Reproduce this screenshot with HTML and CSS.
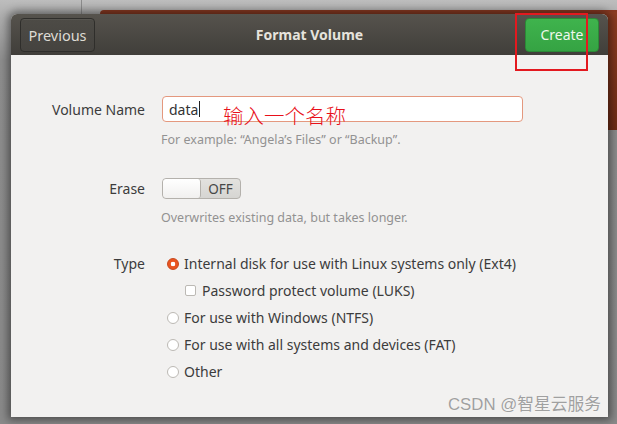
FILE: index.html
```html
<!DOCTYPE html>
<html>
<head>
<meta charset="utf-8">
<link rel="stylesheet" href="styles.css">
</head>
<body>
<div class="desktop">
  <div class="back-window"></div>
  <div class="back-line"></div>
  <div class="right-strip"></div>
  <div class="dialog">
    <div class="header">
      <button class="btn btn-prev">Previous</button>
      <div class="title">Format Volume</div>
      <button class="btn btn-create">Create</button>
    </div>
    <div class="content">
      <div class="row row-name">
        <div class="label">Volume Name</div>
        <div class="field">
          <div class="input"><span class="value">data</span><span class="caret"></span></div>
          <div class="annot">输入一个名称</div>
        </div>
      </div>
      <div class="hint hint-name">For example: “Angela’s Files” or “Backup”.</div>
      <div class="row row-erase">
        <div class="label">Erase</div>
        <div class="switch"><span class="knob"></span><span class="off">OFF</span></div>
      </div>
      <div class="hint hint-erase">Overwrites existing data, but takes longer.</div>
      <div class="row row-type">
        <div class="label">Type</div>
        <div class="options">
          <div class="opt"><span class="radio checked"></span>Internal disk for use with Linux systems only (Ext4)</div>
          <div class="opt sub"><span class="check"></span>Password protect volume (LUKS)</div>
          <div class="opt"><span class="radio"></span>For use with Windows (NTFS)</div>
          <div class="opt"><span class="radio"></span>For use with all systems and devices (FAT)</div>
          <div class="opt"><span class="radio"></span>Other</div>
        </div>
      </div>
    </div>
  </div>
  <div class="highlight"></div>
  <div class="watermark">CSDN @智星云服务</div>
</div>
</body>
</html>
```
FILE: styles.css
```css
html, body {
  margin: 0;
  padding: 0;
}
body {
  width: 617px;
  height: 424px;
  overflow: hidden;
  background: #a7a7a7;
  font-family: "Noto Sans", "DejaVu Sans", sans-serif;
}
.desktop {
  position: relative;
  width: 617px;
  height: 424px;
  background: linear-gradient(to bottom, #bdbdbd 0px, #b0b0b0 14px, #8e8e8e 60px, #8a8a8a 424px);
  overflow: hidden;
}
.back-window {
  position: absolute;
  left: 100px;
  top: 10px;
  width: 530px;
  height: 5px;
  background: #8a3a22;
  border-radius: 4px 0 0 0;
}
.back-line {
  position: absolute;
  left: 81px;
  top: 0;
  width: 1px;
  height: 14px;
  background: #8c8c8c;
}
.right-strip {
  position: absolute;
  left: 600px;
  top: 12px;
  width: 20px;
  height: 118px;
  background: linear-gradient(to bottom, #8d3d22, #6e2c16);
}
.dialog {
  position: absolute;
  left: 11px;
  top: 14px;
  width: 597px;
  height: 403px;
  border-radius: 6px 6px 0 0;
  overflow: hidden;
  background: #f2f1f0;
  box-shadow: 0 0 8px 3px rgba(0,0,0,0.45);
}
.header {
  height: 41px;
  background: linear-gradient(to bottom, #56534d, #403e3a);
  display: flex;
  align-items: center;
  justify-content: space-between;
  padding: 0 9px 0 9px;
  box-sizing: border-box;
  position: relative;
}
.btn {
  font-family: inherit;
  font-size: 14px;
  height: 34px;
  border-radius: 4px;
  padding: 0 0;
  box-sizing: border-box;
}
.btn-prev {
  width: 75px;
  font-size: 14.5px;
  color: #dedbd4;
  background: linear-gradient(to bottom, #4d4b46, #45433f);
  border: 1px solid #2f2e2b;
  box-shadow: inset 0 1px 0 rgba(255,255,255,0.06);
}
.btn-create {
  width: 74px;
  color: #eef7ec;
  background: linear-gradient(to bottom, #3fb34d, #35a343);
  border: 1px solid #2b8a37;
}
.title {
  position: absolute;
  left: 0;
  right: 0;
  text-align: center;
  color: #e6e3dd;
  font-weight: bold;
  font-size: 14px;
  pointer-events: none;
}
.content {
  padding-top: 41px;
  color: #3c3c3c;
  font-size: 14px;
}
.row {
  display: flex;
  align-items: center;
}
.label {
  width: 134px;
  text-align: right;
  margin-right: 17px;
  flex: none;
}
.field {
  position: relative;
}
.input {
  width: 361px;
  height: 26px;
  box-sizing: border-box;
  border: 1px solid #e4987e;
  border-radius: 4px;
  background: #ffffff;
  display: flex;
  align-items: center;
  padding-left: 6px;
  color: #333;
}
.caret {
  display: inline-block;
  width: 1px;
  height: 16px;
  background: #222;
  margin-left: 1px;
}
.annot {
  position: absolute;
  left: 61px;
  top: 5px;
  color: #e8101a;
  font-family: "Noto Sans CJK SC", sans-serif;
  font-weight: 300;
  font-size: 20.5px;
  line-height: 28px;
}
.hint {
  margin-left: 150px;
  font-size: 12.5px;
  line-height: 16px;
  color: #929292;
}
.hint-name {
  margin-top: 10px;
}
.row-erase {
  margin-top: 30px;
}
.switch {
  width: 79px;
  height: 21px;
  box-sizing: border-box;
  border: 1px solid #b4b1ac;
  border-radius: 4px;
  background: linear-gradient(to bottom, #e3e2df, #d6d5d2);
  display: flex;
  align-items: center;
  overflow: hidden;
}
.knob {
  width: 38px;
  height: 19px;
  box-sizing: border-box;
  background: linear-gradient(to bottom, #ffffff, #f1f0ef);
  border-right: 1px solid #b4b1ac;
  border-radius: 3px;
}
.off {
  flex: 1;
  text-align: center;
  font-size: 13.5px;
  color: #474747;
}
.hint-erase {
  margin-top: 11px;
}
.row-type {
  margin-top: 24px;
  align-items: flex-start;
}
.row-type .label {
  line-height: 27px;
}
.options {
  margin-left: 5px;
}
.opt {
  display: flex;
  align-items: center;
  height: 27px;
}
.opt.sub {
  margin-left: 18px;
}
.radio {
  width: 12px;
  height: 12px;
  box-sizing: border-box;
  border-radius: 50%;
  border: 1px solid #bcb9b4;
  background: #ffffff;
  margin-right: 5px;
  flex: none;
}
.radio.checked {
  border: 1px solid #c8461a;
  background: radial-gradient(circle, #ffffff 0 2px, #e95420 2.6px);
}
.check {
  width: 11px;
  height: 11px;
  box-sizing: border-box;
  border: 1px solid #bcb9b4;
  border-radius: 2px;
  background: #ffffff;
  margin-right: 6px;
  flex: none;
}
.highlight {
  position: absolute;
  left: 515px;
  top: 13px;
  width: 73px;
  height: 58px;
  box-sizing: border-box;
  border: 2px solid #e3191f;
}
.watermark {
  position: absolute;
  left: 448px;
  top: 394px;
  font-family: "Liberation Sans", "Noto Sans CJK SC", sans-serif;
  font-size: 16.8px;
  line-height: 22px;
  color: #a0a0a0;
  text-shadow: 0 0 1px #ffffff;
  white-space: nowrap;
}
```
